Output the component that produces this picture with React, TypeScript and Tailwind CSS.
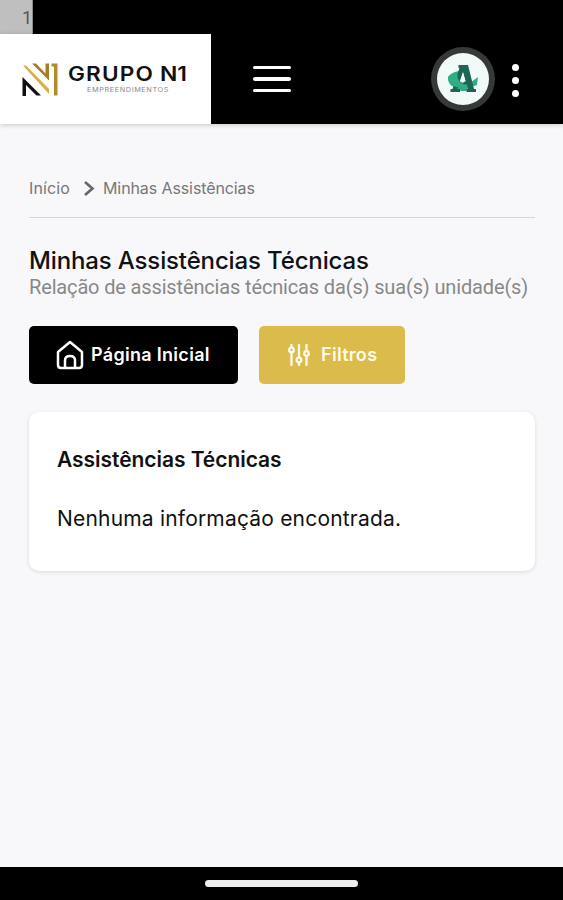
import { MouseEventHandler } from "react"

function StatusBar() {
  return (
    <div className="h-[34px] bg-black">
      <div className="flex h-full w-[33px] items-center justify-end border-r border-[#8a8a8a] bg-[#bfbfbf] font-['Roboto',sans-serif] text-[18px] text-[#555]">
        1
      </div>
    </div>
  )
}

function Logo() {
  return (
    <div className="flex h-[90px] w-[211px] items-center bg-white">
      <svg width="211" height="90" viewBox="0 34 211 90" fill="none">
        <path d="M22.5 77L41 95.5H36.5L26 85V96H22.5Z" fill="#111" />
        <path d="M23 65.5H26L49 89V94Z" fill="#d5ae45" />
        <path d="M32 63.5H36L45.5 73.5V63.5H49V80.5Z" fill="#a87b25" />
        <path d="M51.5 63.5H57.5V95.5H54V66.5H51.5Z" fill="#b58a2d" />
        <text
          x="68"
          y="81"
          textLength="86"
          lengthAdjust="spacingAndGlyphs"
          letterSpacing="1"
          fontSize="20"
          fontWeight="600"
          fontFamily="Inter, sans-serif"
          fill="#111"
        >
          GRUPO
        </text>
        <text
          x="160"
          y="81"
          textLength="27"
          lengthAdjust="spacingAndGlyphs"
          fontSize="20"
          fontWeight="600"
          fontFamily="Inter, sans-serif"
          fill="#111"
        >
          N1
        </text>
        <text
          x="87"
          y="91.5"
          textLength="82"
          lengthAdjust="spacingAndGlyphs"
          letterSpacing="0.5"
          fontSize="6.5"
          fontFamily="Inter, sans-serif"
          fill="#888"
        >
          EMPREENDIMENTOS
        </text>
      </svg>
    </div>
  )
}

function Avatar() {
  return (
    <div className="flex size-16 items-center justify-center rounded-full bg-[#383838]">
      <svg width="52" height="52" viewBox="0 0 52 52">
        <circle cx="26" cy="26" r="26" fill="#f1faf8" />
        <path d="M11 24Q15 19 22 18V30L32 30Q36 28 41 24L40 32Q36 34 33 32L29 38H24L18 34Q11 33 11 24Z" fill="#2fae86" />
        <path
          fillRule="evenodd"
          d="M21.500 12H31L37 36H39V39H29.500V36H31L30 31.500H22L20.500 36H23V39H13.500V36H15.500L22.500 15H21.500ZM26 19L23 28.500H28.500Z"
          fill="#1b6654"
        />
        <path d="M26 19.500L23 28L25.500 30L28.500 28Z" fill="#f1faf8" />
        <path d="M11 24Q14 20 20 19L21 26L23 29L30 33L27 38L21 34.500Q11 33 11 24Z" fill="#2fae86" />
      </svg>
    </div>
  )
}

function Header({ onMenu }: { onMenu?: MouseEventHandler }) {
  return (
    <header className="flex h-[90px] items-center bg-black shadow-[0_1px_5px_rgba(0,0,0,0.2)]">
      <Logo />
      <button onClick={onMenu} aria-label="Menu" className="ml-[42px] flex w-[38px] flex-col gap-2">
        <span className="h-[3.500px] w-full rounded-full bg-white" />
        <span className="h-[3.500px] w-full rounded-full bg-white" />
        <span className="h-[3.500px] w-full rounded-full bg-white" />
      </button>
      <div className="ml-auto flex items-center gap-[17px] pr-11">
        <Avatar />
        <div className="flex flex-col gap-1.5 pt-[3px]">
          <span className="size-[7px] rounded-full bg-white" />
          <span className="size-[7px] rounded-full bg-white" />
          <span className="size-[7px] rounded-full bg-white" />
        </div>
      </div>
    </header>
  )
}

function HomeIcon() {
  return (
    <svg width="28" height="30" viewBox="0 0 28 30" fill="none" stroke="white" strokeWidth="2.500" strokeLinejoin="round">
      <path d="M2 12L14 2L26 12V25Q26 28 23 28H5Q2 28 2 25Z" />
      <path d="M9 28V20.500Q9 16 14 16Q19 16 19 20.500V28" />
    </svg>
  )
}

function SlidersIcon() {
  return (
    <svg width="22" height="24" viewBox="0 0 22 24" fill="none" stroke="#fffbe8" strokeWidth="2.300" strokeLinecap="round">
      <path d="M3.500 2V4M3.500 10V22M11 2V14M11 20V22M18.500 2V7.500M18.500 13.500V22" />
      <circle cx="3.500" cy="7" r="2.300" />
      <circle cx="11" cy="17" r="2.300" />
      <circle cx="18.500" cy="10.500" r="2.300" />
    </svg>
  )
}

export default function App() {
  return (
    <div className="flex h-[900px] w-[563px] flex-col overflow-hidden bg-[#f8f8fa] font-['Inter',sans-serif] text-[#111]">
      <StatusBar />
      <Header />
      <main className="flex-1 px-[29px] pt-[52px]">
        <nav className="flex h-[42px] w-[506px] items-start border-b border-[#d6d6d8] text-[16px] leading-6 text-[#777]">
          <span className="w-[54px] tracking-[0.1px]">Início</span>
          <svg width="14" height="24" viewBox="0 0 14 24" fill="none" stroke="#666" strokeWidth="2.600" className="mr-1.5">
            <path d="M2 6L9.500 12.500L2 19" />
          </svg>
          <span className="tracking-[-0.1px]">Minhas Assistências</span>
        </nav>
        <h1 className="mt-7 text-[24px] leading-[30px] font-medium tracking-[-0.14px]">Minhas Assistências Técnicas</h1>
        <p className="font-['Roboto',sans-serif] text-[20px] leading-[23px] tracking-[-0.15px] whitespace-nowrap text-[#888]">
          Relação de assistências técnicas da(s) sua(s) unidade(s)
        </p>
        <div className="mt-[27px] flex gap-[21px]">
          <button className="flex h-[58px] w-[209px] items-center rounded-[5px] bg-black pl-[27px] text-[18px] font-semibold tracking-[0.3px] whitespace-nowrap text-white">
            <HomeIcon />
            <span className="-mt-0.5 ml-[7px]">Página Inicial</span>
          </button>
          <button className="flex h-[58px] w-[146px] items-center rounded-[5px] bg-[#dabb4b] pl-[29px] text-[18px] font-semibold tracking-[0.3px] text-[#fffbe8]">
            <SlidersIcon />
            <span className="-mt-0.5 ml-[11px]">Filtros</span>
          </button>
        </div>
        <section className="mt-7 h-[159px] w-[506px] rounded-[10px] bg-white px-7 pt-[33px] shadow-[0_1px_4px_rgba(0,0,0,0.12)]">
          <h2 className="text-[21px] leading-[30px] font-semibold tracking-[-0.05px]">Assistências Técnicas</h2>
          <p className="mt-[29px] text-[21px] leading-[30px] tracking-[0.19px]">Nenhuma informação encontrada.</p>
        </section>
      </main>
      <footer className="flex h-[33px] justify-center bg-black pt-[13px]">
        <div className="h-[7px] w-[153px] rounded-full bg-[#eee]" />
      </footer>
    </div>
  )
}
